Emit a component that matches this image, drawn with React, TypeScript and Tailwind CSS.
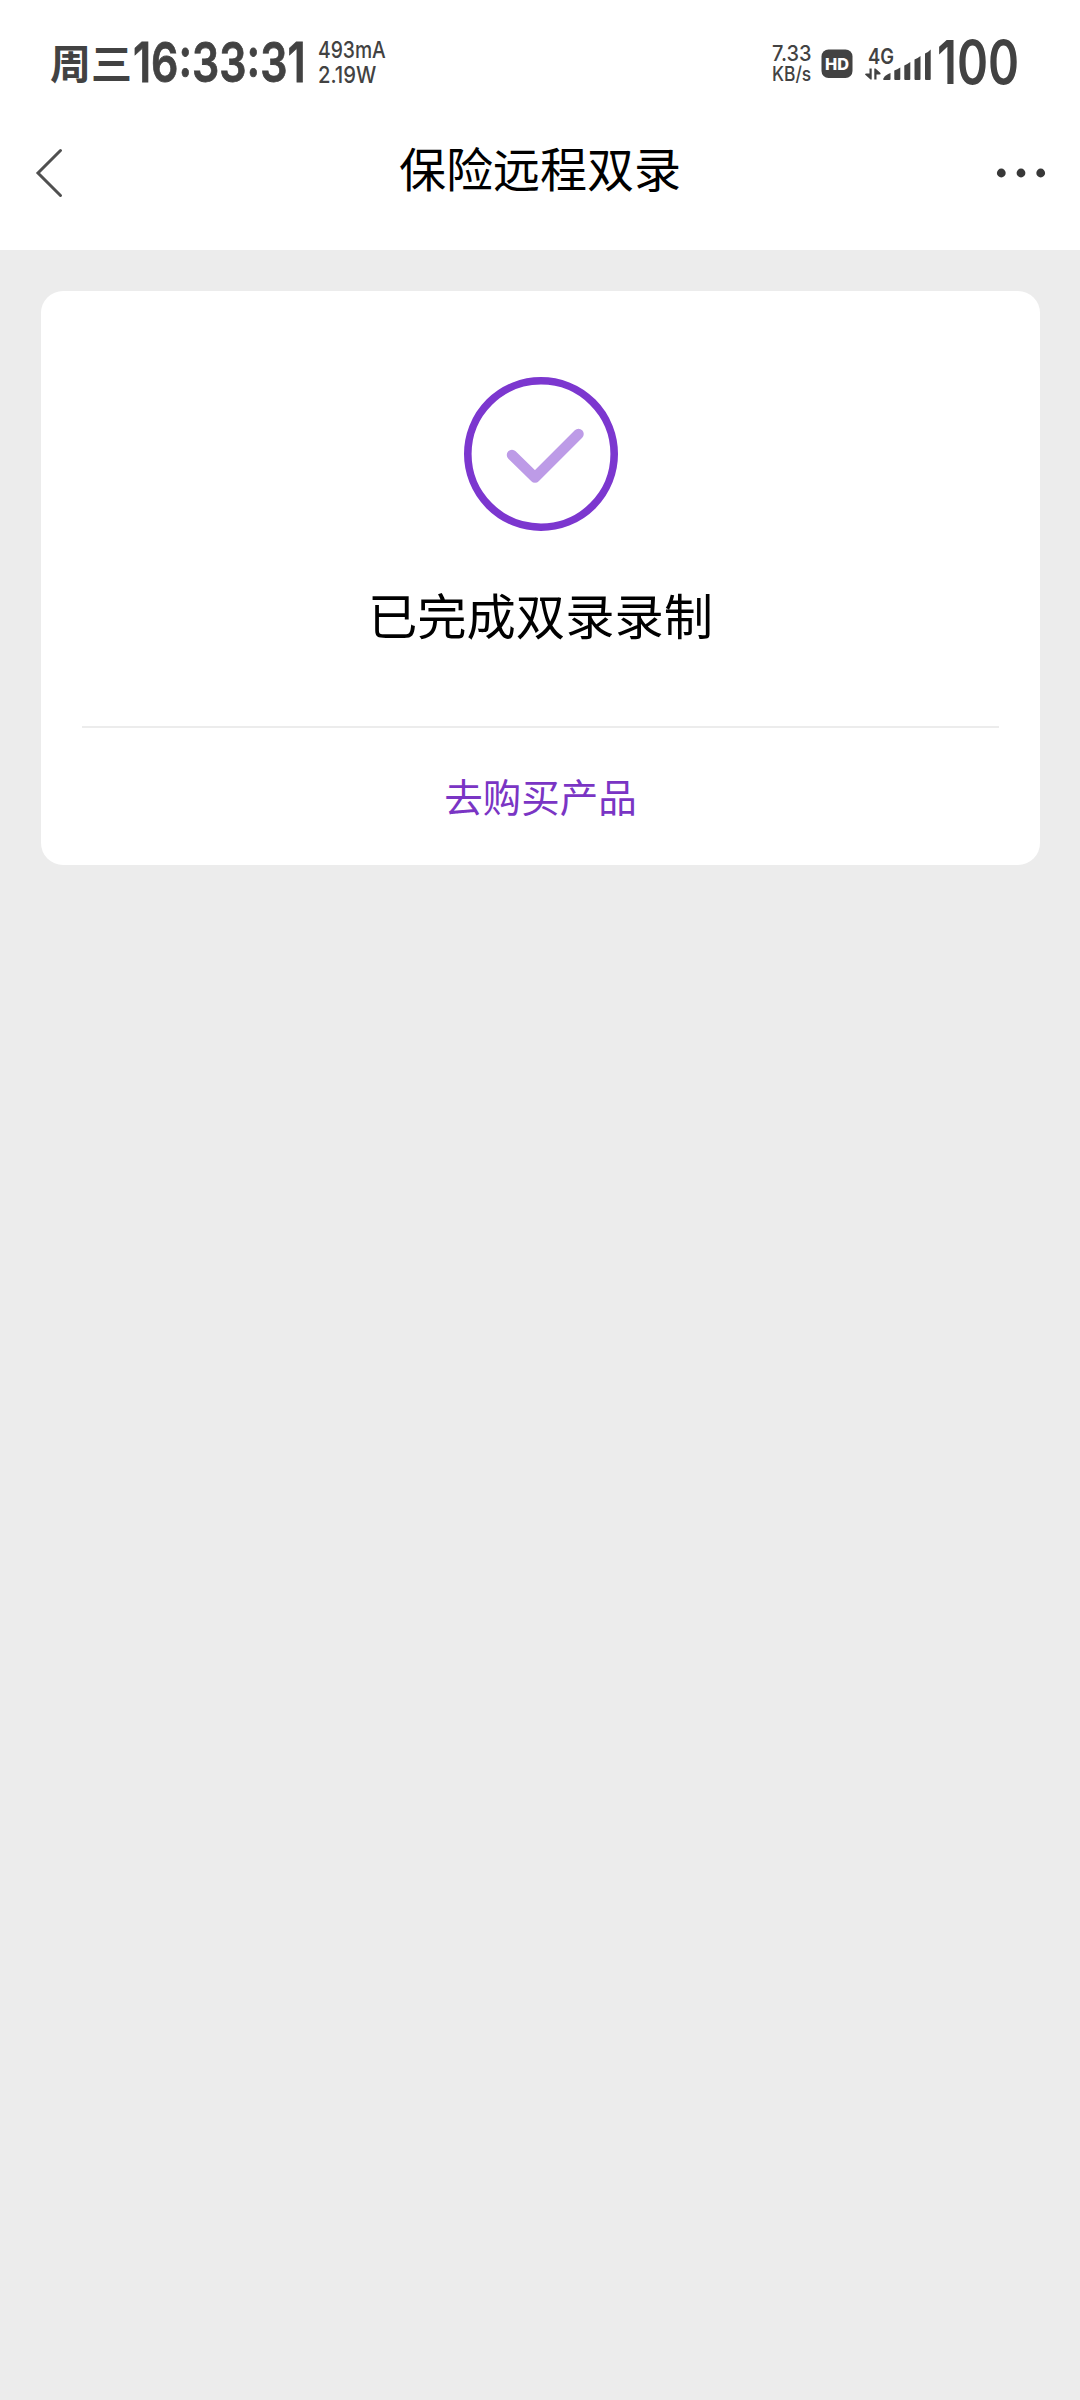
import React from 'react';

const StatusBar: React.FC = () => {
  return (
    <div className="flex h-[120px] items-start pl-[50px] pr-[60px] font-['Inter','Noto_Sans_CJK_SC',sans-serif] whitespace-nowrap text-[#424242]">
      {/* Day and clock */}
      <div className="mt-[39px] w-[83px] font-['Noto_Sans_CJK_SC',sans-serif] text-[41px] leading-[44px] font-bold">周三</div>
      <div className="mt-[32px] w-[185px]">
        <div className="w-max origin-left scale-x-[0.785] text-[54.5px] leading-[60px] font-semibold [-webkit-text-stroke:0.8px_#424242]">16:33:31</div>
      </div>

      {/* Battery current and power */}
      <div className="mt-[38px] w-[80px] text-[23px] leading-[25px] font-medium">
        <div className="w-max origin-left scale-x-[0.84]">493mA</div>
        <div className="w-max origin-left scale-x-[0.88]">2.19W</div>
      </div>

      {/* Network speed */}
      <div className="mt-[42px] ml-auto w-[49px] font-medium">
        <div className="w-max origin-left scale-x-[0.93] text-[21.5px] leading-[22px]">7.33</div>
        <div className="w-max origin-left scale-x-[0.87] text-[20px] leading-[20px]">KB/s</div>
      </div>

      <svg className="mt-[49px] h-[30px] w-[32px]" viewBox="0 0 32 30">
        <rect x="0.5" y="0.5" width="31" height="28.500" rx="7" fill="#424242" />
        <text x="4" y="20.500" textLength="24" lengthAdjust="spacingAndGlyphs" fontSize="16" fontWeight="800" fill="#fff">HD</text>
      </svg>

      <svg className="mt-[42px] ml-[11px] h-[40px] w-[70px] overflow-visible" viewBox="0 -4 70 40" fill="#424242">
        <text x="4" y="17.700" textLength="26" lengthAdjust="spacingAndGlyphs" fontSize="21.500" fontWeight="600">4G</text>
        <path d="M5.500 22.500h2.200v11H6.500L1 28.500q0-1 1.500-1h3zM10.300 33.500v-11h1.200L16.500 27q.5 1.500-1 1.500h-3v5z" />
        <path d="M20.500 34q-2 0-1-1.800 2-3.400 7-5.200v6q0 1-1 1z" />
        <path d="M30.300 24.500q3-1.200 6-3v11.500q0 1-1 1h-4q-1 0-1-1z" />
        <path d="M40.300 19.500q3-1.500 6-3.500v17q0 1-1 1h-4q-1 0-1-1z" />
        <path d="M50.500 13.500q3-1 6-3.500v23q0 1-1 1h-4q-1 0-1-1z" />
        <path d="M61 7.500q3-1 5.700-4v29.500q0 1-1 1H62q-1 0-1-1z" />
      </svg>

      <div className="mt-[28px] ml-[3px] w-[83px]">
        <div className="w-max origin-left scale-x-[0.785] text-[60px] leading-[68px] font-semibold">100</div>
      </div>
    </div>
  );
};

const NavBar: React.FC = () => {
  return (
    <div className="grid h-[130px] grid-cols-[1fr_auto_1fr] items-start">
      <svg className="mt-[27px] ml-[34px] h-[52px] w-[30px]" viewBox="0 0 30 52" fill="none" stroke="#505050" strokeWidth="3" strokeLinecap="round">
        <path d="M26.500 3.500L4 26l22.500 22.500" />
      </svg>
      <h1 className="mt-[12px] text-[47px] leading-[70px] font-normal text-black">保险远程双录</h1>
      <svg className="mt-[47px] mr-[32px] h-[12px] w-[54px] justify-self-end" viewBox="0 0 54 12" fill="#383838">
        <circle cx="7.300" cy="6" r="4.400" />
        <circle cx="27" cy="6" r="4.400" />
        <circle cx="46.700" cy="6" r="4.400" />
      </svg>
    </div>
  );
};

const App: React.FC = () => {
  return (
    <div className="min-h-[2400px] w-[1080px] bg-[#ececec] font-['Noto_Sans_CJK_SC',sans-serif]">
      <header className="h-[250px] bg-white">
        <StatusBar />
        <NavBar />
      </header>

      <main className="px-[41px] pt-[41px]">
        <div className="flex h-[574px] w-[999px] flex-col items-center rounded-[22px] bg-white">
          <svg className="mt-[86px] h-[154px] w-[154px]" viewBox="0 0 154 154" fill="none">
            <circle cx="77" cy="77" r="73.200" stroke="#7c37cf" strokeWidth="7.600" />
            <path d="M48 78l23 22.500L114.500 57" stroke="#bd9be7" strokeWidth="10.500" strokeLinecap="round" strokeLinejoin="round" />
          </svg>
          <p className="mt-[48px] text-[49.300px] leading-[70px] text-black">已完成双录录制</p>

          {/* Purchase link */}
          <div className="mt-auto flex h-[139px] w-[917px] items-center justify-center border-t-2 border-[#ececec] pb-[3px]">
            <button className="text-[38.500px] leading-[56px] text-[#7a35c4]">去购买产品</button>
          </div>
        </div>
      </main>
    </div>
  );
};

export default App;
